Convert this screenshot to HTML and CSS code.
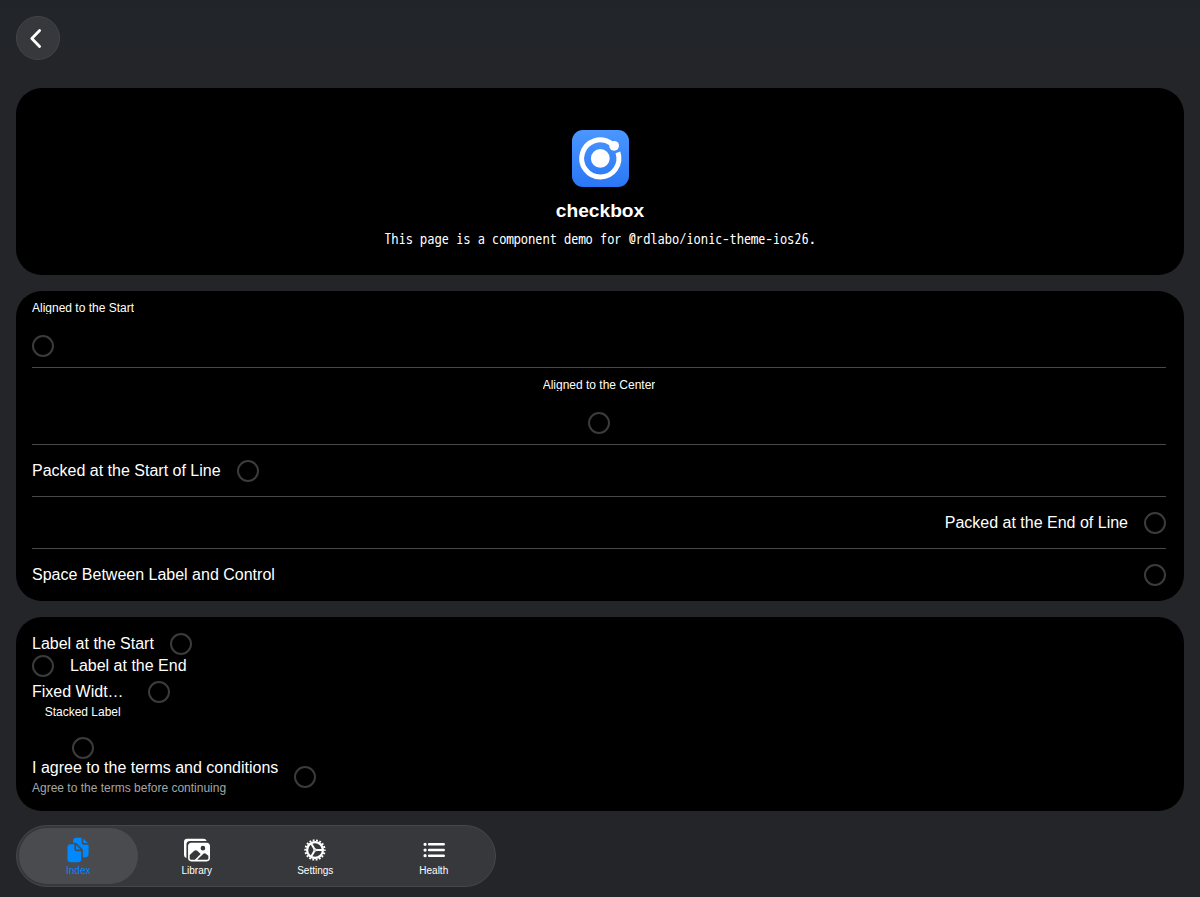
FILE: index.html
```html
<!DOCTYPE html>
<html lang="en">
<head>
<meta charset="utf-8">
<title>checkbox</title>
<link rel="stylesheet" href="styles.css">
</head>
<body>
<header class="toolbar">
  <button class="back" aria-label="Back"><svg viewBox="0 0 44 44"><path d="M23.6 14.5 15.8 22.4 23.6 30.4"/></svg></button>
</header>
<main class="content">
  <section class="card intro">
    <svg class="logo" viewBox="0 0 57 57">
      <defs><linearGradient id="blue" x1="0" y1="0" x2="0" y2="57" gradientUnits="userSpaceOnUse"><stop offset="0" stop-color="#4a97ff"/><stop offset="1" stop-color="#2a76f5"/></linearGradient></defs>
      <rect width="57" height="57" rx="11" fill="url(#blue)"/>
      <circle cx="28.3" cy="28.4" r="9.4" fill="#fff"/>
      <path d="M38.6 12.8A18.6 18.6 0 1 0 45.6 22.1" transform="translate(.3 .3)" fill="none" stroke="#fff" stroke-width="5"/>
      <circle cx="42.1" cy="15.8" r="4.9" fill="#fff"/>
    </svg>
    <h1 class="title">checkbox</h1>
    <p class="description">This page is a component demo for @rdlabo/ionic-theme-ios26.</p>
  </section>
  <section class="card list">
    <label class="item stacked"><span class="small-label">Aligned to the Start</span><i class="check"></i></label>
    <label class="item stacked centered"><span class="small-label">Aligned to the Center</span><i class="check"></i></label>
    <label class="item"><span>Packed at the Start of Line</span><i class="check"></i></label>
    <label class="item end"><span>Packed at the End of Line</span><i class="check"></i></label>
    <label class="item between"><span>Space Between Label and Control</span><i class="check"></i></label>
  </section>
  <section class="card placements">
    <label class="line"><span>Label at the Start</span><i class="check"></i></label>
    <label class="line"><i class="check"></i><span>Label at the End</span></label>
    <label class="line fixed"><span class="fixed-label">Fixed Widt…</span><i class="check"></i></label>
    <label class="stack"><span class="small-label">Stacked Label</span><i class="check"></i></label>
    <label class="line terms"><span>I agree to the terms and conditions<small class="helper">Agree to the terms before continuing</small></span><i class="check"></i></label>
  </section>
</main>
<nav class="tabs">
  <a class="tab selected"><svg class="icon" viewBox="0 0 512 512"><path d="M298.39 248a4 4 0 002.86-6.8l-78.4-79.72a4 4 0 00-6.85 2.81V236a12 12 0 0012 12z"/><path d="M197 267a43.67 43.67 0 01-13-31v-92h-72a64.19 64.19 0 00-64 64v224a64 64 0 0064 64h144a64 64 0 0064-64V280h-92a43.61 43.61 0 01-31-13zM372 120h70.39a4 4 0 002.86-6.8l-78.4-79.72a4 4 0 00-6.85 2.81V108a12 12 0 0012 12z"/><path d="M372 152a44.34 44.34 0 01-44-44V16H220a60.07 60.07 0 00-60 60v36h42.12A40.81 40.81 0 01231 124.14l109.16 111a41.11 41.11 0 0111.83 29V400h53.05c32.51 0 58.95-26.92 58.95-60V152z"/></svg><span>Index</span></a>
  <a class="tab"><svg class="icon" viewBox="0 0 512 512"><path d="M450.29 112H142c-34 0-62 27.51-62 61.33v245.34c0 33.82 28 61.33 62 61.33h308c34 0 62-26.18 62-60V173.33c0-33.82-27.68-61.33-61.71-61.33zm-77.15 61.34a46 46 0 11-46.28 46 46.19 46.19 0 0146.28-46.01zm-231.55 276c-17 0-29.86-13.75-29.86-30.66v-64.83l90.46-80.79a46.54 46.54 0 0163.44 1.83L328.27 337l-113 112.33zM480 418.67a30.67 30.67 0 01-30.71 30.66H259L376.08 333a46.24 46.24 0 0159.44-.16L480 370.59z"/><path d="M384 32H64A64 64 0 000 96v256a64.11 64.11 0 0048 62V152a72 72 0 0172-72h326a64.11 64.11 0 00-62-48z"/></svg><span>Library</span></a>
  <a class="tab"><svg class="icon line-icon" viewBox="0 0 512 512"><circle cx="256" cy="256" r="156" stroke-width="44"/><circle cx="256" cy="256" r="190" stroke-width="40" pathLength="180" stroke-dasharray="5.4 4.6" stroke-dashoffset="2.7"/><path stroke-width="38" d="M278 256H412M245 237 178 121M245 275 178 391"/><circle cx="256" cy="256" r="22" stroke-width="22"/></svg><span>Settings</span></a>
  <a class="tab"><svg class="icon line-icon" viewBox="0 0 512 512"><path stroke-width="48" stroke-linecap="round" d="M160 144H448M160 256H448M160 368H448"/><path stroke-width="64" stroke-linecap="round" d="M80 144h.1M80 256h.1M80 368h.1"/></svg><span>Health</span></a>
</nav>
</body>
</html>
```
FILE: styles.css
```css
* { box-sizing: border-box; }
body {
  margin: 0;
  height: 897px;
  overflow: hidden;
  display: flex;
  flex-direction: column;
  background: linear-gradient(#212529, #242529 80px);
  color: #fff;
  font: 16px/20px "Liberation Sans", Arial, sans-serif;
}
.toolbar { height: 88px; padding: 16px; }
.back {
  display: block;
  width: 44px;
  height: 44px;
  padding: 0;
  border: 1px solid #434447;
  border-radius: 50%;
  background: #37383b;
}
.back svg {
  display: block;
  width: 44px;
  height: 44px;
  margin: -1px;
  fill: none;
  stroke: #fff;
  stroke-width: 2.8;
  stroke-linecap: round;
  stroke-linejoin: round;
}
.content { display: grid; gap: 16px; padding: 0 16px; }
.card { border-radius: 26px; background: #000; overflow: hidden; }
.intro {
  height: 187px;
  padding-top: 42px;
  display: flex;
  flex-direction: column;
  align-items: center;
}
.logo { width: 57px; height: 57px; }
.title { margin: 12px 0 0; font-size: 19.2px; line-height: 24px; }
.description {
  margin: 6px 0 0;
  font: 14.4px/21px "WenQuanYi Zen Hei Mono", "Noto Sans Mono CJK JP", monospace;
}
.list { height: 310px; padding: 0 18px 0 16px; }
.item {
  height: 52px;
  display: flex;
  align-items: center;
  gap: 16px;
  border-bottom: 1px solid #48484a;
}
.item:last-child { border-bottom: 0; }
.check {
  flex: none;
  width: 22px;
  height: 22px;
  border: 2px solid #3b3b3b;
  border-radius: 50%;
}
.stacked {
  height: 77px;
  flex-direction: column;
  align-items: flex-start;
  gap: 21px;
  padding-top: 10px;
}
.centered { align-items: center; }
.small-label { height: 13px; font-size: 12px; line-height: 14px; overflow: hidden; }
.end { justify-content: flex-end; }
.between { justify-content: space-between; }
.placements { height: 194px; padding: 16px; }
.line { display: flex; align-items: center; gap: 16px; width: max-content; height: 22px; }
.fixed { height: 30px; }
.fixed-label { width: 100px; white-space: nowrap; }
.stack {
  display: flex;
  flex-direction: column;
  align-items: center;
  gap: 20px;
  width: 101.4px;
  margin-top: -2px;
}
.stack .small-label { height: 12px; line-height: 14px; overflow: visible; }
.terms { height: 36px; }
.helper { display: block; font-size: 12px; line-height: 16px; margin-top: 2px; color: #a6a6a6; }
.tabs {
  display: flex;
  width: 480px;
  height: 62px;
  margin: 14px 0 0 16px;
  padding: 2px;
  border: 1px solid #454649;
  border-radius: 31px;
  background: #37383b;
}
.tab {
  flex: 1;
  display: flex;
  flex-direction: column;
  align-items: center;
  padding-top: 9px;
  border-radius: 28px;
  font-size: 10px;
  line-height: 12px;
}
.tab span { margin-top: 2px; }
.selected { background: #4a4b4e; color: #0088ff; }
.icon { width: 26px; height: 26px; fill: currentColor; }
.line-icon { fill: none; stroke: currentColor; }
```
